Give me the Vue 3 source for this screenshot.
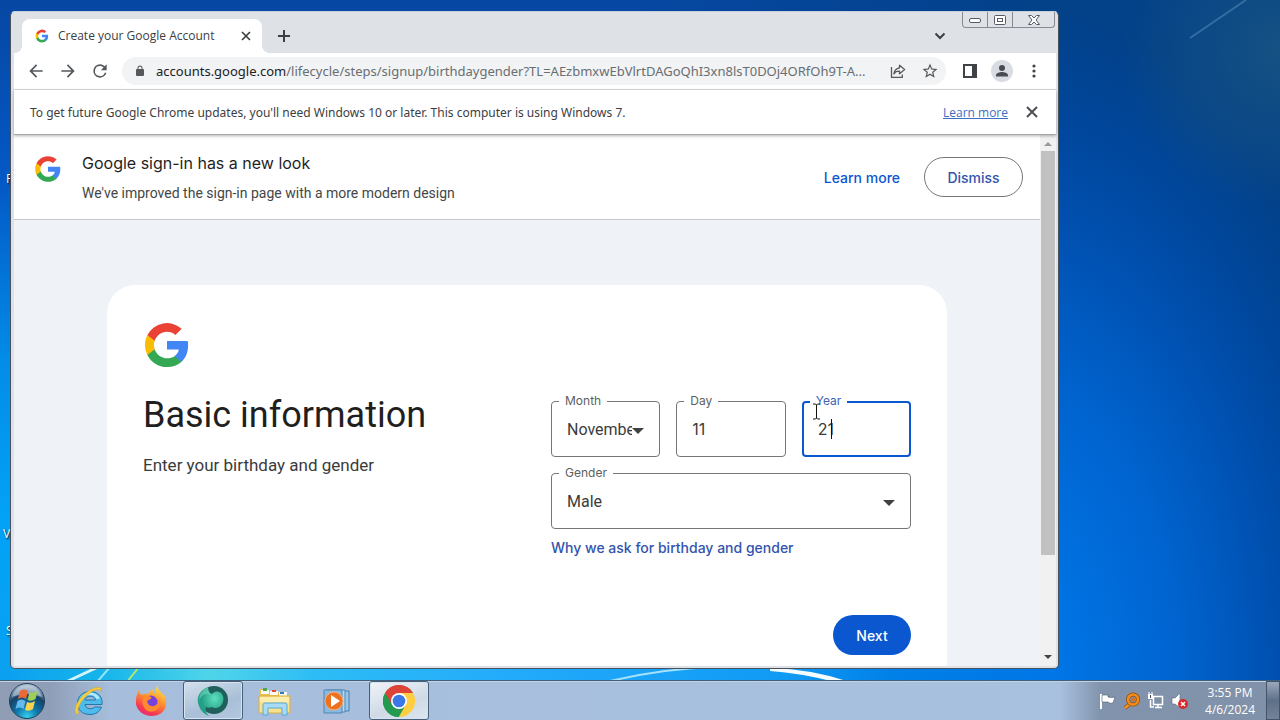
<!-- App.vue -->
<template>
  <div class="desktop">
    <svg class="wallpaper" viewBox="0 0 1280 720" preserveAspectRatio="none" aria-hidden="true">
      <defs>
        <linearGradient id="leftSky" x1="0" y1="0" x2="0" y2="1">
          <stop offset="0" stop-color="#0647a2" />
          <stop offset="0.25" stop-color="#0458c6" />
          <stop offset="0.5" stop-color="#028ce8" />
          <stop offset="0.72" stop-color="#03a2f6" />
          <stop offset="1" stop-color="#06a0f2" />
        </linearGradient>
        <radialGradient id="rightSky" gradientUnits="userSpaceOnUse" cx="0" cy="0" r="1" gradientTransform="translate(1000 680) scale(400 680)">
          <stop offset="0" stop-color="#007df0" />
          <stop offset="0.2" stop-color="#0072e2" />
          <stop offset="0.44" stop-color="#0064d0" />
          <stop offset="0.7" stop-color="#004fae" />
          <stop offset="0.85" stop-color="#00469a" />
          <stop offset="1" stop-color="#034189" />
        </radialGradient>
        <radialGradient id="corner" gradientUnits="userSpaceOnUse" cx="1280" cy="50" r="160">
          <stop offset="0" stop-color="#155182" />
          <stop offset="1" stop-color="#155182" stop-opacity="0" />
        </radialGradient>
        <linearGradient id="topSky">
          <stop offset="0" stop-color="#0647a2" />
          <stop offset="1" stop-color="#034189" />
        </linearGradient>
        <linearGradient id="horizon">
          <stop offset="0" stop-color="#0b9ff0" />
          <stop offset="0.1" stop-color="#16b5ea" />
          <stop offset="0.2" stop-color="#4fd5ea" />
          <stop offset="0.3" stop-color="#2ebcf6" />
          <stop offset="0.5" stop-color="#21aafb" />
          <stop offset="0.75" stop-color="#109af4" />
          <stop offset="0.85" stop-color="#0080e8" />
          <stop offset="1" stop-color="#0076e6" />
        </linearGradient>
      </defs>
      <rect width="1280" height="720" fill="url(#rightSky)" />
      <rect x="1100" width="180" height="220" fill="url(#corner)" />
      <rect width="1040" height="720" fill="url(#leftSky)" />
      <rect x="640" width="400" height="40" fill="url(#topSky)" />
      <rect y="640" width="1050" height="80" fill="url(#horizon)" />
      <path d="M66 682 98 667" stroke="#d5f4fb" stroke-width="3" />
      <path d="M97 682 110 667" stroke="#8ee4f4" stroke-width="2" />
      <path d="M127 682 139 667" stroke="#b6e96a" stroke-width="2" />
      <path d="M610 681Q665 668 720 667" fill="none" stroke="#a4e2fb" stroke-width="2" />
      <path d="M770 668Q812 669 850 682H835Q800 673 770 671Z" fill="#f4fcff" />
      <path d="M1190 38 1246 0" stroke="#5c8fbd" stroke-opacity=".5" stroke-width="2" />
    </svg>
    <svg class="sprite" aria-hidden="true">
      <symbol id="google" viewBox="0 0 24 24">
        <path fill="#4285f4" d="M22.56 12.25c0-.78-.07-1.53-.2-2.25H12v4.26h5.92a5.06 5.06 0 0 1-2.2 3.32v2.77h3.57c2.08-1.92 3.27-4.74 3.27-8.1z" />
        <path fill="#34a853" d="M12 23c2.97 0 5.46-.98 7.28-2.66l-3.57-2.77c-.98.66-2.23 1.06-3.71 1.06-2.86 0-5.29-1.93-6.16-4.53H2.18v2.84C3.99 20.53 7.7 23 12 23z" />
        <path fill="#fbbc05" d="M5.84 14.1a6.6 6.6 0 0 1 0-4.2V7.06H2.18a11 11 0 0 0 0 9.88l3.66-2.84z" />
        <path fill="#ea4335" d="M12 5.38c1.62 0 3.06.56 4.21 1.64l3.15-3.15A11 11 0 0 0 2.18 7.06L5.84 9.9C6.71 7.31 9.14 5.38 12 5.38z" />
      </symbol>
    </svg>

    <div class="workspace">
      <span v-for="item in shortcuts" :key="item.text" class="shortcut" :class="item.place">{{ item.text }}</span>

      <section class="window" aria-label="Create your Google Account">
        <div class="caption-buttons">
          <button aria-label="Minimize"><svg width="14" height="8" viewBox="0 0 14 8"><rect x="1.5" y="2.5" width="11" height="4" rx="1.5" fill="#fff" stroke="#555b66" /></svg></button>
          <button aria-label="Maximize"><svg width="14" height="12" viewBox="0 0 14 12"><rect x="1.5" y="1.5" width="11" height="9" rx="1" fill="#fff" stroke="#555b66" /><rect x="4.5" y="4.5" width="5" height="3" fill="#fff" stroke="#555b66" /></svg></button>
          <button class="wide" aria-label="Close"><svg width="14" height="12" viewBox="0 0 14 12"><path d="M1.500 1.500h3L7 4l2.500-2.500h3L9 6l3.500 4.500h-3L7 8l-2.500 2.500h-3L5 6z" fill="#fff" stroke="#555b66" /></svg></button>
        </div>

        <div class="tab-strip">
          <div class="tab">
            <svg class="favicon"><use href="#google" /></svg>
            <span class="tab-title">Create your Google Account</span>
            <button class="icon-button small" aria-label="Close tab">
              <svg width="10" height="10" viewBox="0 0 10 10"><path d="m1 1 8 8M9 1 1 9" stroke="#3c4043" stroke-width="1.700" /></svg>
            </button>
          </div>
          <button class="icon-button new-tab" aria-label="New tab">
            <svg width="12" height="12" viewBox="0 0 12 12"><path d="M6 0v12M0 6h12" stroke="#3c4043" stroke-width="2" /></svg>
          </button>
          <button class="icon-button tab-search" aria-label="Search tabs">
            <svg width="12" height="8" viewBox="0 0 12 8"><path d="m1.500 1.500 4.500 4.500 4.500-4.500" fill="none" stroke="#3c4043" stroke-width="2" /></svg>
          </button>
        </div>

        <div class="toolbar">
          <button class="icon-button" aria-label="Back"><svg width="20" height="20" viewBox="0 0 24 24"><path fill="#55595d" d="M20 11H7.830l5.590-5.590L12 4l-8 8 8 8 1.410-1.410L7.830 13H20z" /></svg></button>
          <button class="icon-button" aria-label="Forward"><svg width="20" height="20" viewBox="0 0 24 24"><path fill="#55595d" d="m12 4-1.410 1.410L16.170 11H4v2h12.170l-5.580 5.590L12 20l8-8z" /></svg></button>
          <button class="icon-button" aria-label="Reload"><svg width="20" height="20" viewBox="0 0 24 24"><path fill="#55595d" d="M17.650 6.350A7.960 7.960 0 0 0 12 4a8 8 0 1 0 7.730 10h-2.080A6 6 0 1 1 12 6c1.660 0 3.140.69 4.220 1.780L13 11h7V4z" /></svg></button>
          <div class="address">
            <svg class="lock" width="16" height="16" viewBox="0 0 24 24"><path fill="#55595d" d="M18 8h-1V6A5 5 0 0 0 7 6v2H6a2 2 0 0 0-2 2v10c0 1.100.9 2 2 2h12a2 2 0 0 0 2-2V10a2 2 0 0 0-2-2zM9 6a3 3 0 0 1 6 0v2H9z" /></svg>
            <p class="url"><b>accounts.google.com</b>/lifecycle/steps/signup/birthdaygender?TL=AEzbmxwEbVlrtDAGoQhI3xn8lsT0DOj4ORfOh9T-A...</p>
            <button class="icon-button" aria-label="Share this page">
              <svg width="16" height="16" viewBox="0 0 16 16" fill="none" stroke="#55595d" stroke-width="1.300"><path d="M1.500 4v10.300h10.800V11.500" /><path d="M9.500 2.200 14.600 6.500 9.500 10.800V8.200C6.800 8.100 5 9 3.900 11c.3-3.200 2.200-5.600 5.600-6.200z" stroke-linejoin="round" /></svg>
            </button>
            <button class="icon-button" aria-label="Bookmark this tab">
              <svg width="18" height="18" viewBox="0 0 24 24"><path fill="#55595d" d="m22 9.240-7.190-.62L12 2 9.190 8.630 2 9.240l5.460 4.730L5.820 21 12 17.270 18.180 21l-1.630-7.030zM12 15.400l-3.760 2.270 1-4.280-3.320-2.880 4.380-.38L12 6.100l1.710 4.040 4.380.38-3.320 2.880 1 4.280z" /></svg>
            </button>
          </div>
          <button class="icon-button" aria-label="Side panel"><svg width="14" height="14" viewBox="0 0 14 14"><path fill="#3f4347" fill-rule="evenodd" d="M0 0h14v14H0zM2 2v10h7V2z" /></svg></button>
          <button class="icon-button" aria-label="Profile"><svg width="22" height="22" viewBox="0 0 22 22"><circle cx="11" cy="11" r="11" fill="#dadce3" /><circle cx="11" cy="8" r="3" fill="#474b52" /><path d="M5 16.500v-1.300c0-2 3.800-3.100 6-3.100s6 1.100 6 3.100v1.300z" fill="#474b52" /></svg></button>
          <button class="icon-button" aria-label="Menu"><svg width="4" height="14" viewBox="0 0 4 14" fill="#3f4347"><circle cx="2" cy="2" r="1.600" /><circle cx="2" cy="7" r="1.600" /><circle cx="2" cy="12" r="1.600" /></svg></button>
        </div>

        <div class="infobar">
          <p>To get future Google Chrome updates, you'll need Windows 10 or later. This computer is using Windows 7.</p>
          <a href="#">Learn more</a>
          <button class="icon-button" aria-label="Close notice">
            <svg width="12" height="12" viewBox="0 0 12 12"><path d="m1 1 10 10M11 1 1 11" stroke="#4b4f53" stroke-width="2" /></svg>
          </button>
        </div>

        <div class="viewport">
          <main class="page">
            <header class="banner">
              <svg class="banner-logo"><use href="#google" /></svg>
              <div class="banner-text">
                <h2>Google sign-in has a new look</h2>
                <p>We've improved the sign-in page with a more modern design</p>
              </div>
              <a href="#" class="banner-link">Learn more</a>
              <button class="dismiss">Dismiss</button>
            </header>

            <form class="card" @submit.prevent>
              <svg class="card-logo"><use href="#google" /></svg>
              <div class="columns">
                <div class="intro">
                  <h1>Basic information</h1>
                  <p>Enter your birthday and gender</p>
                </div>
                <div class="fields">
                  <div class="birthday">
                    <div class="field">
                      <label for="month">Month</label>
                      <select id="month" v-model="form.month">
                        <option v-for="m in months" :key="m">{{ m }}</option>
                      </select>
                      <svg class="arrow" width="12" height="6" viewBox="0 0 12 6"><path d="M0 0h12L6 6z" /></svg>
                    </div>
                    <div class="field">
                      <label for="day">Day</label>
                      <input id="day" v-model="form.day" type="text" inputmode="numeric" />
                    </div>
                    <div class="field active">
                      <label for="year">Year</label>
                      <input id="year" v-model="form.year" type="text" inputmode="numeric" />
                      <span class="caret"></span>
                      <svg class="pointer" width="9" height="17" viewBox="0 0 9 17"><path d="M1 1h2.500l1 1 1-1H8M1 16h2.500l1-1 1 1H8M4.500 2v13" fill="none" stroke="#111" /></svg>
                    </div>
                  </div>
                  <div class="field">
                    <label for="gender">Gender</label>
                    <select id="gender" v-model="form.gender">
                      <option v-for="g in genders" :key="g">{{ g }}</option>
                    </select>
                    <svg class="arrow" width="12" height="6" viewBox="0 0 12 6"><path d="M0 0h12L6 6z" /></svg>
                  </div>
                  <a href="#" class="why">Why we ask for birthday and gender</a>
                  <button class="next">Next</button>
                </div>
              </div>
            </form>
          </main>
          <div class="scrollbar">
            <svg width="8" height="4" viewBox="0 0 8 4"><path d="M0 4h8L4 0z" fill="#999" /></svg>
            <div class="track"><div class="thumb"></div></div>
            <svg width="8" height="4" viewBox="0 0 8 4"><path d="M0 0h8L4 4z" fill="#444" /></svg>
          </div>
        </div>
      </section>
    </div>

    <footer class="taskbar">
      <button class="start" aria-label="Start">
        <svg width="38" height="38" viewBox="0 0 38 38">
          <defs>
            <radialGradient id="orb" cx=".5" cy=".95" r=".9">
              <stop offset="0" stop-color="#36d0ee" /><stop offset=".35" stop-color="#0e78ac" /><stop offset=".7" stop-color="#164268" /><stop offset="1" stop-color="#a9bdd0" />
            </radialGradient>
          </defs>
          <circle cx="19" cy="19" r="17.500" fill="url(#orb)" stroke="#223f5b" />
          <path d="M4 15a15.500 15.500 0 0 1 30 0q-15-6-30 0z" fill="#dce8f2" opacity=".5" />
          <path d="M12 9q4-3 8 0l-2 8q-4-3-8 0z" fill="#ee6836" />
          <path d="M21.500 10q4 2 8-1l-2 8q-4 3-8 1z" fill="#a0cf58" />
          <path d="M9.500 19q4-3 8 0l-2 8q-4-3-8 0z" fill="#65b9ec" />
          <path d="M19 20q4 2 8-1l-2 8q-4 3-8 1z" fill="#fbd34d" />
        </svg>
      </button>
      <button class="task" aria-label="Internet Explorer">
        <svg width="32" height="32" viewBox="0 0 32 32">
          <path d="M29 19.500H12c.5 4.500 7 5.500 9.500 2.500h7c-2 5-6 7.500-11.500 7.500C9 29.500 4.500 24.500 4.500 18S9.500 6.500 17 6.500 30 11.500 29 19.500zM12 15h10.500c-1-5-9.500-5-10.500 0z" fill="#4fbbea" fill-rule="evenodd" stroke="#1f78b0" />
          <path d="M7 14q3-6.500 10-6.500 7 0 10 6l-3.500.5q-2-4-6.500-4-5 0-7 4z" fill="#b4e8fa" />
          <path d="M4 29.500C-2 24 8 9 19 4c5-2.500 10-3 9.500 2.500C27 3.500 23 4.500 19 6.500 10 12 3 23 5.500 28z" fill="#f6cf3c" stroke="#d79f1e" stroke-width=".5" />
        </svg>
      </button>
      <button class="task" aria-label="Firefox">
        <svg width="32" height="32" viewBox="0 0 32 32">
          <defs>
            <linearGradient id="fox" x1=".8" y1="0" x2=".3" y2="1"><stop offset="0" stop-color="#ffe44a" /><stop offset=".45" stop-color="#ff9130" /><stop offset=".8" stop-color="#f53b50" /><stop offset="1" stop-color="#e82a77" /></linearGradient>
          </defs>
          <path d="M4 5q0 3 3 5 3-2 6-1 2-4 6-5-1 3 1 5 0-5 2-8 1 4 4 6l1 3 1-2q4 6 3 12c-1 7-7 11-14.500 11S2 26 1 19q-.500-8 3-14z" fill="url(#fox)" />
          <circle cx="16" cy="17" r="6.500" fill="#7542dc" />
          <path d="M8 12q5-3 9 1l-5 3q1 6 7 5 6-2 4-8 4 6 0 11-6 5-12 1-5-5-3-13z" fill="#ff8b2e" />
        </svg>
      </button>
      <button class="task open" aria-label="Remote desktop">
        <svg width="34" height="34" viewBox="0 0 34 34">
          <defs>
            <radialGradient id="orbGreen" cx=".65" cy=".4"><stop offset="0" stop-color="#5fe0bc" /><stop offset="1" stop-color="#229f87" /></radialGradient>
          </defs>
          <circle cx="18" cy="16" r="14" fill="#20605c" />
          <path d="M12 3C2 7 0 15 3 22c2 5 5 8 10 10-3-3-4-6-3-9 2 1 4 1 6 0 3 2 8 1 10-3 3-5 1-11-3-12-3-1-5 0-7 2-3-1-4-4-4-7z" fill="url(#orbGreen)" />
          <path d="M12 3q-9 4-9 14 2-6 7-7 3 0 5 1-3-3-3-8z" fill="#7fdcc4" opacity=".5" />
        </svg>
      </button>
      <button class="task" aria-label="Windows Explorer">
        <svg width="34" height="32" viewBox="0 0 34 32">
          <path d="M1 28V4h7l2 3h15l2 3h5v18z" fill="#e8bf54" />
          <path d="M3 5h8v4H3zM12 6h8v4h-8zM21 7h8v5h-8z" fill="#f8faf4" />
          <path d="M5 3h4v3H5z" fill="#4ba947" /><path d="M14 5h4v2h-4z" fill="#d94d31" /><path d="M22 7h4v2h-4z" fill="#3477be" />
          <path d="M1 11h31v17H1z" fill="#f8e18b" stroke="#dbae45" />
          <path d="M2 12h29v5H2z" fill="#fcefae" />
          <path d="M5 30V20q0-2 2-2h20q2 0 2 2v10h-5v-7H10v7z" fill="#a9dcf4" stroke="#5aa8d7" />
        </svg>
      </button>
      <button class="task" aria-label="Windows Media Player">
        <svg width="32" height="32" viewBox="0 0 32 32">
          <path d="M9 6h19v20H9z" fill="#96c7e9" stroke="#4a7eac" /><path d="M5 5h19v22H5z" fill="#b3d9f1" stroke="#5285b3" /><path d="M3 5h18v23H3z" fill="#87b9e1" stroke="#5285b3" />
          <circle cx="13" cy="16" r="9" fill="#ed7220" stroke="#f8b27e" /><path d="M10 10v12l9-6z" fill="#fff" />
        </svg>
      </button>
      <button class="task open current" aria-label="Google Chrome">
        <svg width="32" height="32" viewBox="0 0 48 48">
          <path d="M24 24 3.200 12A24 24 0 0 1 44.800 12z" fill="#db4437" />
          <path d="M24 24 44.800 12A24 24 0 0 1 24 48z" fill="#ffcd40" />
          <path d="M24 24v24A24 24 0 0 1 3.200 12z" fill="#0f9d58" />
          <path d="M24 12h20.800L34.400 30 24 48l0-24z" fill="#ffcd40" />
          <path d="M3.200 12 13.600 30 24 36l10-6-10.400 18A24 24 0 0 1 3.200 12z" fill="#239a50" />
          <path d="M3.200 12A24 24 0 0 1 44.800 12H24L13.600 30z" fill="#db4437" />
          <circle cx="24" cy="24" r="12" fill="#fff" /><circle cx="24" cy="24" r="9.500" fill="#3b78e7" />
        </svg>
      </button>

      <div class="tray">
        <svg width="18" height="18" viewBox="0 0 18 18"><path d="M2 2v15" stroke="#fff" stroke-width="2" /><path d="M3 3h6v2q3 1 7 0l-2 6q-3 1-5-1H3z" fill="#fff" stroke="#4c5a68" stroke-width=".6" /></svg>
        <svg width="18" height="18" viewBox="0 0 18 18"><path d="m8 11-6 5" stroke="#8d4b0d" stroke-width="4" /><path d="m8 11-6 5" stroke="#f6931e" stroke-width="2.500" /><circle cx="10" cy="7.500" r="5" fill="none" stroke="#8d4b0d" stroke-width="4" /><circle cx="10" cy="7.500" r="5" fill="none" stroke="#f58b18" stroke-width="2.600" /><circle cx="10" cy="7.500" r="2" fill="#d96c0e" /></svg>
        <svg width="18" height="18" viewBox="0 0 18 18"><path d="M6.500 4.500h9v8h-9z" fill="#7e8fa3" stroke="#fff" stroke-width="1.500" /><path d="M8 15.500h7M11 13v2M3.500 8v7H7" stroke="#fff" stroke-width="1.500" fill="none" /><path d="M1 2h5v5H1z" fill="#fff" /><path d="M2 0v3M5 0v3" stroke="#fff" /><path d="M3.500 3v3" stroke="#445" /></svg>
        <svg width="18" height="18" viewBox="0 0 18 18"><path d="M1 6h3l5-5v15l-5-4H1z" fill="#fff" stroke="#5c6673" stroke-width=".6" /><circle cx="12" cy="12" r="5" fill="#d72b2b" /><path d="m10 10 4 4M14 10l-4 4" stroke="#fff" stroke-width="1.500" /></svg>
        <div class="clock"><time>3:55 PM</time><time>4/6/2024</time></div>
        <button class="show-desktop" aria-label="Show desktop"></button>
      </div>
    </footer>
  </div>
</template>

<script setup>
import { reactive } from 'vue'

const shortcuts = [
  { text: 'F', place: 'upper' },
  { text: 'V', place: 'middle' },
  { text: 'S', place: 'lower' }
]

const months = [
  'January', 'February', 'March', 'April', 'May', 'June',
  'July', 'August', 'September', 'October', 'November', 'December'
]

const genders = ['Female', 'Male', 'Rather not say', 'Custom']

const form = reactive({
  month: 'November',
  day: '11',
  year: '21',
  gender: 'Male'
})
</script>

<style>
body {
  margin: 0;
}
</style>

<style scoped>
* {
  box-sizing: border-box;
}

h1, h2, p {
  margin: 0;
  font-weight: 400;
}

button {
  display: flex;
  align-items: center;
  justify-content: center;
  padding: 0;
  border: 0;
  background: none;
  font-family: inherit;
}

.desktop {
  position: relative;
  display: flex;
  flex-direction: column;
  height: 100vh;
  overflow: hidden;
  font-family: "Open Sans", "Noto Sans", sans-serif;
  font-size: 12px;
  color: #3c4043;
}

.wallpaper {
  position: absolute;
  width: 100%;
  height: 100%;
}

.sprite {
  position: absolute;
  width: 0;
  height: 0;
}

.workspace {
  position: relative;
  flex: 1;
  min-height: 0;
}

.shortcut {
  position: absolute;
  left: 6px;
  color: #fff;
  text-shadow: 1px 1px 2px #000;
}

.upper { top: 170px; }
.middle { top: 525px; left: 3px; }
.lower { top: 622px; }

/* browser window */
.window {
  position: absolute;
  inset: 11px 221px 11px 10px;
  display: flex;
  flex-direction: column;
  padding: 0 2px 2px 3px;
  border: 1px solid #47525c;
  border-top-color: #c6d0dc;
  border-radius: 5px;
  background: #dee1e6;
  overflow: hidden;
}

.caption-buttons {
  position: absolute;
  top: 0;
  right: 3px;
  display: flex;
  border: 1px solid #858b94;
  border-top: 0;
  border-radius: 0 0 4px 4px;
}

.caption-buttons button {
  width: 25px;
  height: 15px;
  border-right: 1px solid #858b94;
}

.caption-buttons .wide {
  width: 41px;
  border-right: 0;
}

.tab-strip {
  display: flex;
  align-items: center;
  height: 41px;
  padding: 7px 8px 0;
}

.tab {
  position: relative;
  display: flex;
  align-items: center;
  width: 240px;
  height: 34px;
  padding: 0 8px 1px 13px;
  border-radius: 8px 8px 0 0;
  background: #fff;
}

.tab::before,
.tab::after {
  content: "";
  position: absolute;
  bottom: 0;
  width: 8px;
  height: 8px;
}

.tab::before {
  right: 100%;
  background: radial-gradient(circle at 0 0, transparent 8px, #fff 8px);
}

.tab::after {
  left: 100%;
  background: radial-gradient(circle at 100% 0, transparent 8px, #fff 8px);
}

.favicon {
  width: 14px;
  height: 14px;
  margin-right: 9px;
}

.tab-title {
  flex: 1;
  white-space: nowrap;
}

.icon-button {
  flex: none;
  width: 32px;
  height: 32px;
}

.small {
  width: 16px;
}

.new-tab {
  margin-left: 6px;
}

.tab-search {
  margin: 0 92px 0 auto;
}

.toolbar {
  display: flex;
  align-items: center;
  height: 37px;
  padding: 0 6px;
  border-bottom: 1px solid #dadce0;
  background: #fff;
}

.address {
  display: flex;
  flex: 1;
  align-items: center;
  min-width: 0;
  height: 28px;
  margin: 0 8px 0 6px;
  padding-left: 12px;
  border-radius: 14px;
  background: #f1f3f4;
}

.lock {
  width: 12px;
  margin-right: 10px;
}

.url {
  flex: 1;
  overflow: hidden;
  font-family: "Noto Sans", sans-serif;
  font-size: 13px;
  color: #6a6e72;
  white-space: nowrap;
}

.url b {
  font-weight: 400;
  color: #202124;
}

.infobar {
  position: relative;
  z-index: 1;
  display: flex;
  align-items: center;
  height: 45px;
  padding: 0 8px 0 16px;
  border-bottom: 1px solid #a5a8ab;
  background: #fff;
  box-shadow: 0 1px 3px rgba(0, 0, 0, 0.3);
}

.infobar p {
  flex: 1;
  font-family: "Noto Sans", sans-serif;
}

.infobar a {
  margin-right: 8px;
  color: #3b6fc4;
}

.viewport {
  display: flex;
  flex: 1;
  min-height: 0;
}

.page {
  flex: 1;
  min-width: 0;
  overflow: hidden;
  background: #eff2f7;
  font-family: Inter, Roboto, sans-serif;
}

.banner {
  display: flex;
  align-items: center;
  height: 85px;
  padding: 0 17px 0 20px;
  border-bottom: 1px solid #c4c7c5;
  background: #fff;
}

.banner-logo {
  align-self: flex-start;
  width: 28px;
  height: 28px;
  margin: 20px 20px 0 0;
}

.banner-text {
  flex: 1;
}

.banner h2 {
  font-size: 16px;
  line-height: 24px;
  color: #1f1f1f;
}

.banner p {
  margin-top: 8px;
  font-family: Roboto, sans-serif;
  font-size: 14px;
  line-height: 20px;
  color: #444746;
}

.banner-link {
  font-size: 14px;
  font-weight: 500;
  color: #0b57d0;
  text-decoration: none;
}

.dismiss {
  width: 99px;
  height: 40px;
  margin-left: 24px;
  border: 1px solid #747775;
  border-radius: 20px;
  font-size: 14px;
  font-weight: 500;
  color: #3354ad;
}

.card {
  width: calc(100% - 186px);
  height: 500px;
  margin: 65px auto 0;
  padding: 36px;
  border-radius: 28px;
  background: #fff;
}

.card-logo {
  display: block;
  width: 48px;
  height: 48px;
}

.columns {
  display: grid;
  grid-template-columns: 1fr 1fr;
  padding-top: 24px;
}

h1 {
  font-family: Roboto, sans-serif;
  font-size: 36px;
  line-height: 44px;
  color: #1f1f1f;
}

.intro p {
  margin-top: 16px;
  font-family: Roboto, sans-serif;
  font-size: 17px;
  line-height: 24px;
  color: #3a3c3c;
}

.fields {
  display: flex;
  flex-direction: column;
  gap: 16px;
  padding: 8px 0 0 24px;
}

.birthday {
  display: grid;
  grid-template-columns: repeat(3, 1fr);
  gap: 16px;
}

.field {
  position: relative;
  min-width: 0;
  height: 56px;
}

.field label {
  position: absolute;
  top: -8px;
  left: 8px;
  padding: 0 6px;
  background: #fff;
  font-size: 12px;
  line-height: 16px;
  color: #5c5f5e;
}

.field input,
.field select {
  width: 100%;
  height: 100%;
  margin: 0;
  padding: 0 15px;
  border: 1px solid #747775;
  border-radius: 4px;
  outline: 0;
  background: transparent;
  appearance: none;
  font-family: inherit;
  font-size: 16px;
  color: #3a3c3c;
}

.field select {
  padding-right: 27px;
  font-family: Roboto, sans-serif;
}

.field .arrow {
  position: absolute;
  top: 27px;
  right: 16px;
  fill: #3f4241;
}

.active input {
  padding: 0 14px;
  border: 2px solid #0b57d0;
}

.active label {
  color: #3b63b4;
}

.caret {
  position: absolute;
  top: 18px;
  left: 29px;
  width: 1px;
  height: 20px;
  background: #111;
}

.pointer {
  position: absolute;
  top: 2px;
  left: 10px;
}

.why {
  align-self: flex-start;
  margin-top: -7px;
  font-size: 14px;
  font-weight: 500;
  line-height: 20px;
  color: #3354ad;
  text-decoration: none;
}

.next {
  align-self: flex-end;
  width: 78px;
  height: 40px;
  margin-top: 41px;
  border-radius: 20px;
  background: #0b57d0;
  font-size: 14px;
  font-weight: 500;
  color: #fff;
}

.scrollbar {
  display: flex;
  flex-direction: column;
  align-items: center;
  width: 16px;
  padding: 7px 0;
  background: #f1f1f1;
}

.track {
  flex: 1;
  width: 100%;
  padding: 5px 1px;
}

.thumb {
  height: 81%;
  background: #c1c1c1;
}

/* taskbar */
.taskbar {
  position: relative;
  display: flex;
  height: 40px;
  padding-left: 8px;
  border-top: 1px solid #41607c;
  background: linear-gradient(90deg, #909db4 0, #8f9eb8 50px, #a6bedb 110px, #a8c1df 1060px, #8294ad 1100px, #8091a9 100%);
  box-shadow: inset 0 1px 0 #c4d3e4;
}

.start {
  width: 38px;
  margin-right: 13px;
}

.task {
  width: 60px;
  height: 39px;
  margin-right: 2px;
  border-radius: 3px;
}

.open {
  border: 1px solid #465f7b;
  background: linear-gradient(160deg, #d4e0ec, #a9bfd7 60%, #b4c9df);
  box-shadow: inset 0 0 0 1px #d7e3ef;
}

.current {
  background: linear-gradient(160deg, #f1f4f8, #cfdae6 60%, #dde6ef);
}

.tray {
  display: flex;
  align-items: center;
  gap: 6px;
  margin-left: auto;
  color: #fff;
}

.clock {
  display: flex;
  flex-direction: column;
  align-items: center;
  margin: 0 5px 0 10px;
  line-height: 17px;
}

.show-desktop {
  width: 14px;
  height: 39px;
  border: 1px solid #43536a;
  background: linear-gradient(#99a7ba, #5e7087 50%, #73849a);
}
</style>
